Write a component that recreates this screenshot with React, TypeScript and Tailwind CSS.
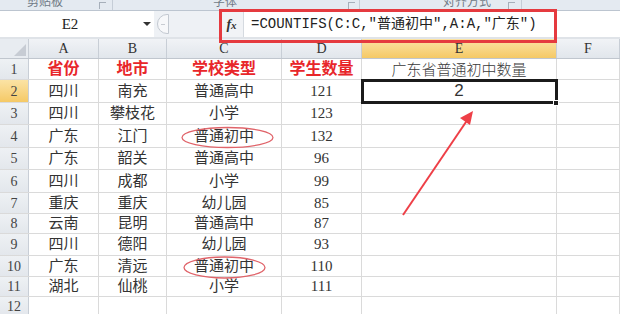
import React from "react";

const serif = "font-['Liberation_Serif','Noto_Sans_CJK_SC',serif]";

const colWidths = ["w-[70px]", "w-[68px]", "w-[115px]", "w-[80px]", "w-[195px]", "flex-1"];
const rowHeights = [
  "h-[21px]",
  "h-[23px]",
  "h-[22px]",
  "h-[23px]",
  "h-[22px]",
  "h-[23px]",
  "h-[21px]",
  "h-[20px]",
  "h-[22px]",
  "h-[21px]",
  "h-[20px]",
  "h-[20px]",
];

const data: string[][] = [
  ["四川", "南充", "普通高中", "121"],
  ["四川", "攀枝花", "小学", "123"],
  ["广东", "江门", "普通初中", "132"],
  ["广东", "韶关", "普通高中", "96"],
  ["四川", "成都", "小学", "99"],
  ["重庆", "重庆", "幼儿园", "85"],
  ["云南", "昆明", "普通高中", "87"],
  ["四川", "德阳", "幼儿园", "93"],
  ["广东", "清远", "普通初中", "110"],
  ["湖北", "仙桃", "小学", "111"],
];

const Launcher = () => (
  <span className="block w-[7px] h-[7px] border-l border-t border-[#8d97a3] opacity-70" />
);

const Ribbon = () => (
  <div className="h-[11px] overflow-hidden flex bg-[#e4eaf1] border-b border-[#bcc5d0] text-[12px] text-[#707a86] font-['Noto_Sans_CJK_SC',sans-serif]">
    <div className="w-[113px] relative border-r border-[#c5cdd7]">
      <span className="absolute left-[27px] -top-[7px] leading-[16px]">剪贴板</span>
      <span className="absolute left-[99px] top-[2px]"><Launcher /></span>
    </div>
    <div className="w-[247px] relative border-r border-[#c5cdd7]">
      <span className="absolute left-[100px] -top-[7px] leading-[16px]">字体</span>
      <span className="absolute left-[235px] top-[2px]"><Launcher /></span>
    </div>
    <div className="w-[162px] relative border-r border-[#c5cdd7]">
      <span className="absolute left-[83px] -top-[7px] leading-[16px]">对齐方式</span>
      <span className="absolute left-[148px] top-[2px]"><Launcher /></span>
    </div>
    <div className="flex-1" />
  </div>
);

const FormulaBar = () => (
  <div className="h-[26px] flex bg-[#eef1f5]">
    <div className={`w-[140px] bg-white flex items-center justify-center text-[15px] text-[#222] ${serif}`}>
      E2
    </div>
    <div className="w-[14px] bg-white flex items-center justify-center">
      <span className="w-0 h-0 border-l-[4px] border-r-[4px] border-t-[4px] border-l-transparent border-r-transparent border-t-[#333]" />
    </div>
    <div className="w-[66px] flex items-center">
      <div className="ml-[3px] w-[12px] h-[20px] rounded-l-full border border-[#c3c9d1] bg-[#f7f8fa] flex items-center justify-center">
        <span className="block w-[4px] h-px bg-[#c8ccd2]" />
      </div>
    </div>
    <div className="flex-1 flex bg-white">
      <div className="w-[24px] flex items-center justify-center bg-[#f1f3f6] border-r border-[#d5dae0]">
        <span className={`italic font-bold text-[14px] text-[#333] ${serif}`}>
          f<span className="text-[11px]">x</span>
        </span>
      </div>
      <div className="flex items-center pl-[7px] text-[14px] text-[#222] font-['Liberation_Mono','Noto_Sans_CJK_SC',monospace] whitespace-nowrap">
        =COUNTIFS(C:C,"普通初中",A:A,"广东")
      </div>
    </div>
  </div>
);

const HeaderRow = () => (
  <div className={`h-[20px] flex text-[14px] text-[#333] ${serif} border-b border-[#c0c6ce]`}>
    <div className="w-[29px] bg-[#e8ecf1] border-r border-[#c8ced6] flex items-end justify-end p-[2px]">
      <svg width="12" height="12" viewBox="0 0 12 12">
        <polygon points="12,0 12,12 0,12" fill="#c7ccd4" />
      </svg>
    </div>
    {["A", "B", "C", "D", "E", "F"].map((c, i) => (
      <div
        key={c}
        className={`${colWidths[i]} flex items-center justify-center border-r border-[#c8ced6] ${
          c === "E"
            ? "bg-gradient-to-b from-[#fbe3a4] to-[#f5c965]"
            : "bg-gradient-to-b from-[#f1f3f6] to-[#e1e6ec]"
        }`}
      >
        {c}
      </div>
    ))}
  </div>
);

const Cell = ({
  w,
  children,
  className = "",
}: {
  w: string;
  children?: React.ReactNode;
  className?: string;
}) => (
  <div className={`${w} flex items-center justify-center border-r border-[#dadada] ${className}`}>
    {children}
  </div>
);

export default function App() {
  return (
    <div className="w-[620px] h-[314px] overflow-hidden bg-white relative">
      <Ribbon />
      <FormulaBar />
      <div className="h-[2px] bg-[#dfe3e8]" />
      <HeaderRow />

      <div className={`${serif} text-[15px] text-[#333]`}>
        {rowHeights.map((h, r) => {
          const rowNum = r + 1;
          const row = r === 0 ? null : data[r - 1];
          return (
            <div key={rowNum} className={`${h} flex border-b border-[#dadada]`}>
              <div
                className={`w-[29px] flex items-center justify-center text-[14px] text-[#444] border-r border-[#c8ced6] ${
                  rowNum === 2
                    ? "bg-gradient-to-b from-[#fbe3a4] to-[#f5c965]"
                    : "bg-gradient-to-b from-[#eef1f4] to-[#e3e7ec]"
                }`}
              >
                {rowNum}
              </div>
              {rowNum === 1 ? (
                <>
                  {["省份", "地市", "学校类型", "学生数量"].map((t, i) => (
                    <Cell key={t} w={colWidths[i]} className="font-bold text-[16px] text-[#e8262a]">
                      {t}
                    </Cell>
                  ))}
                  <Cell w={colWidths[4]} className="text-[15px] text-[#3a3a3a] font-['Noto_Sans_CJK_SC',sans-serif] font-light">
                    广东省普通初中数量
                  </Cell>
                  <Cell w={colWidths[5]} />
                </>
              ) : row ? (
                <>
                  {row.map((t, i) => (
                    <Cell key={i} w={colWidths[i]}>
                      {t}
                    </Cell>
                  ))}
                  <Cell w={colWidths[4]} className="text-[17px] font-['Liberation_Sans',sans-serif]">
                    {rowNum === 2 ? "2" : null}
                  </Cell>
                  <Cell w={colWidths[5]} />
                </>
              ) : (
                <>
                  {colWidths.map((w, i) => (
                    <Cell key={i} w={w} />
                  ))}
                </>
              )}
            </div>
          );
        })}
      </div>

      {/* selected cell E2 */}
      <div className="absolute left-[361px] top-[79px] w-[197px] h-[25px] border-[3px] border-[#1b1b1b]" />
      <div className="absolute left-[553px] top-[100px] w-[6px] h-[6px] bg-[#1b1b1b] border border-white" />

      {/* red box round the formula */}
      <div className="absolute left-[219px] top-[9px] w-[338px] h-[34px] border-[3px] border-[#e53a3f]" />

      {/* annotations */}
      <svg className="absolute left-0 top-0 pointer-events-none" width="620" height="314">
        <ellipse cx="227.5" cy="137.5" rx="45.5" ry="10" fill="none" stroke="#e0646a" strokeWidth="1.3" />
        <ellipse cx="224.5" cy="267.5" rx="40.5" ry="10.5" fill="none" stroke="#e0646a" strokeWidth="1.3" />
        <line x1="403" y1="215" x2="468" y2="119" stroke="#ee3f47" strokeWidth="2" />
        <polygon points="473,111 460,118 470,125" fill="#ee3f47" />
      </svg>
    </div>
  );
}
